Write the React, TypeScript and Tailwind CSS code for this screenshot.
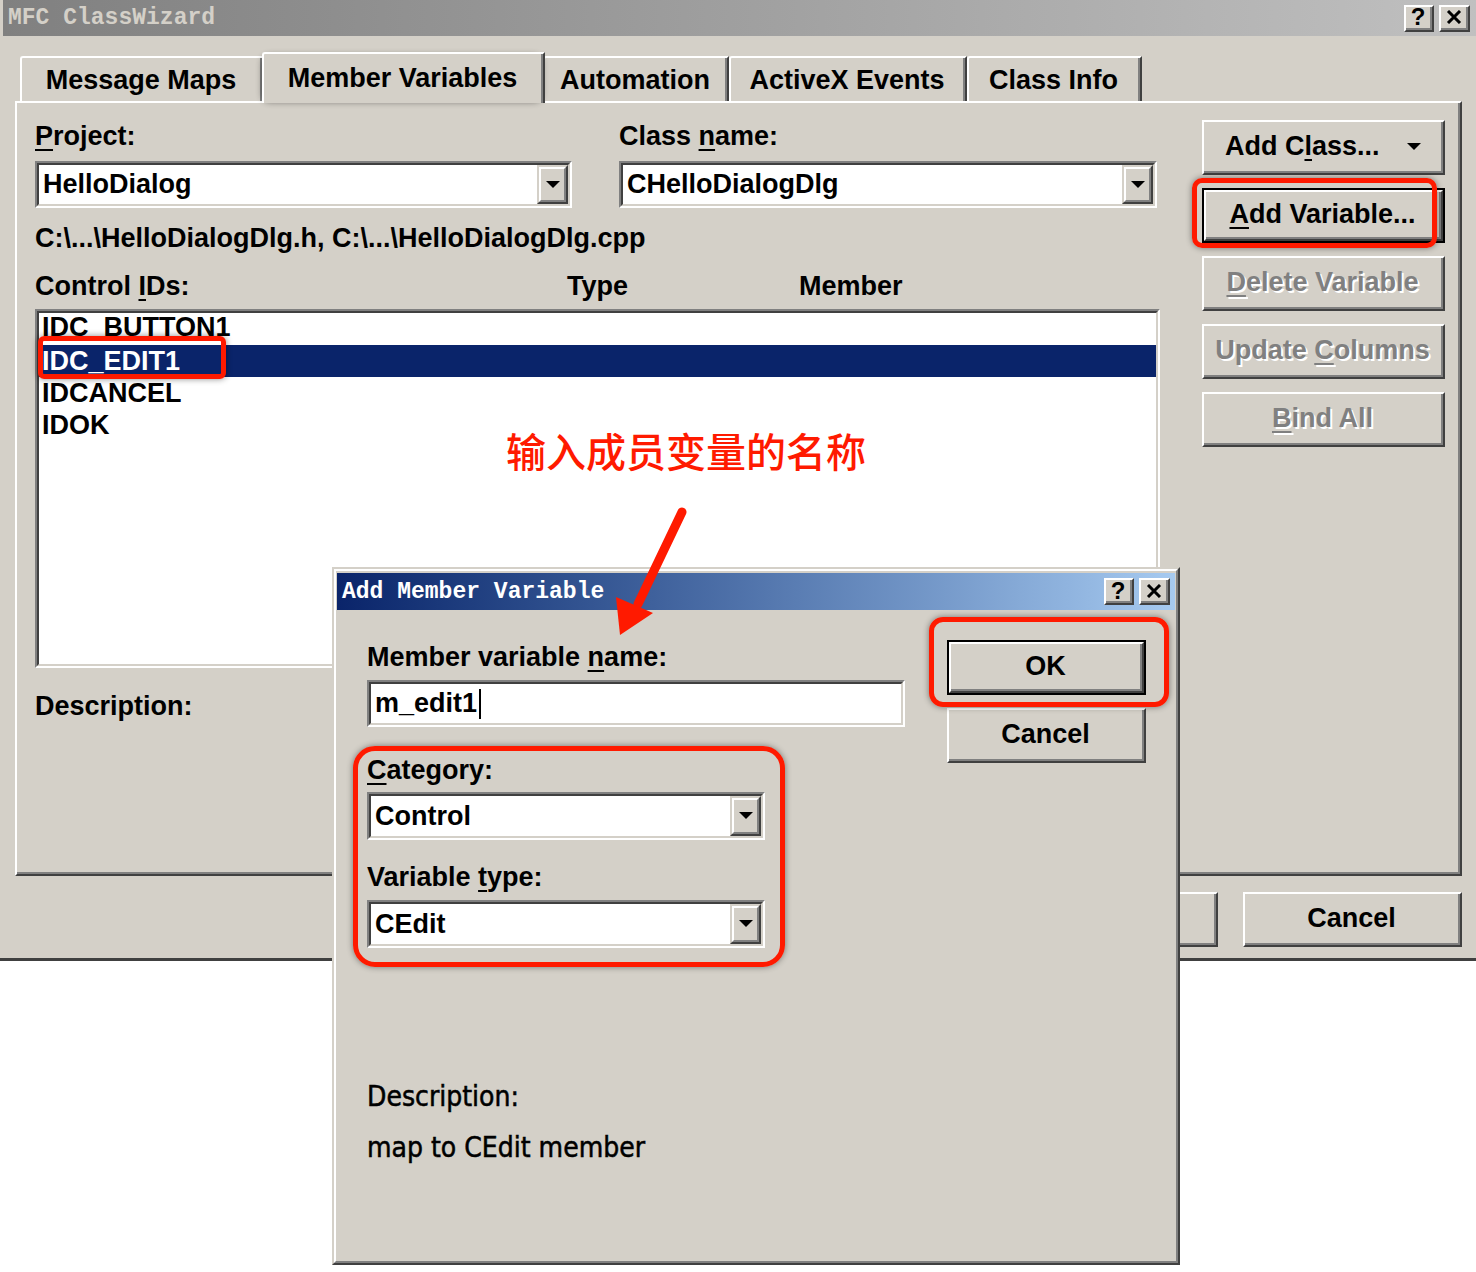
import React from "react";

const FACE = "bg-[#d4d0c8]";

const Mn: React.FC<{ children: React.ReactNode }> = ({ children }) => (
  <span className="underline decoration-2 underline-offset-[4px]">{children}</span>
);

interface ButtonProps {
  children: React.ReactNode;
  isDefault?: boolean;
  disabled?: boolean;
  className?: string;
  innerClassName?: string;
}

const ClassicButton: React.FC<ButtonProps> = ({ children, isDefault, disabled, className, innerClassName }) => {
  const face = (
    <div className="h-full w-full border-2 border-t-white border-l-white border-r-[#404040] border-b-[#404040]">
      <div
        className={`flex h-full w-full items-center border-r-2 border-b-2 border-[#808080] text-[27px] font-bold ${
          innerClassName ?? "justify-center"
        } ${disabled ? "text-[#808080] [text-shadow:2px_2px_0_#ffffff]" : "text-black"}`}
      >
        {children}
      </div>
    </div>
  );
  return <div className={`${FACE} ${isDefault ? "border-2 border-black" : ""} ${className ?? ""}`}>{face}</div>;
};

const Sunken: React.FC<{ children: React.ReactNode; className?: string }> = ({ children, className }) => (
  <div className={`border-2 border-t-[#808080] border-l-[#808080] border-r-white border-b-white ${className ?? ""}`}>
    <div className="h-full w-full border-2 border-t-[#404040] border-l-[#404040] border-r-[#d4d0c8] border-b-[#d4d0c8] bg-white">
      {children}
    </div>
  </div>
);

const DownArrow = () => (
  <svg width="14" height="8" viewBox="0 0 14 8">
    <path d="M0 0H14L7 7Z" fill="#000" />
  </svg>
);

const Combo: React.FC<{ value: string; className?: string }> = ({ value, className }) => (
  <Sunken className={className}>
    <div className="flex h-full items-center">
      <span className="flex-1 pl-[4px] text-[27px] font-bold leading-none">{value}</span>
      <div className="h-full w-[31px] border-2 border-t-[#d4d0c8] border-l-[#d4d0c8] border-r-[#404040] border-b-[#404040]">
        <div className="flex h-full items-center justify-center border-2 border-t-white border-l-white border-r-[#808080] border-b-[#808080] bg-[#d4d0c8]">
          <DownArrow />
        </div>
      </div>
    </div>
  </Sunken>
);

const CloseGlyph = () => (
  <svg width="16" height="14" viewBox="0 0 16 14">
    <path d="M2 1L14 13M14 1L2 13" stroke="#000" strokeWidth="3" />
  </svg>
);

const CaptionButtons = () => (
  <div className="flex gap-[5px]">
    <ClassicButton className="h-[27px] w-[30px]">
      <span className="text-[24px] leading-none">?</span>
    </ClassicButton>
    <ClassicButton className="h-[27px] w-[31px]">
      <CloseGlyph />
    </ClassicButton>
  </div>
);

const tabs = [
  { label: "Message Maps", w: "w-[244px]" },
  { label: "Member Variables", w: "w-[283px]", selected: true },
  { label: "Automation", w: "w-[186px]" },
  { label: "ActiveX Events", w: "w-[238px]" },
  { label: "Class Info", w: "w-[175px]" },
];

const controlIds = ["IDC_BUTTON1", "IDC_EDIT1", "IDCANCEL", "IDOK"];

const RedBox: React.FC<{ className: string }> = ({ className }) => (
  <div
    className={`pointer-events-none absolute border-[5px] border-[#ff1a00] shadow-[0_0_6px_rgba(0,0,0,0.45)] ${className}`}
  />
);

export default function App() {
  return (
    <div className="relative h-[1272px] w-[1476px] overflow-hidden bg-white font-['Liberation_Sans',Arial,sans-serif] text-black">
      {/* ClassWizard window */}
      <div className="flex h-[961px] flex-col border-b-[3px] border-[#404040] bg-[#d4d0c8] pl-[3px]">
        <div className="flex h-[36px] items-center justify-between bg-linear-to-r from-[#808080] to-[#c0c0c0] pl-[5px] pr-[6px]">
          <span className="font-['Liberation_Mono',monospace] text-[23px] font-bold text-[#d4d0c8]">MFC ClassWizard</span>
          <CaptionButtons />
        </div>

        {/* tabs */}
        <div className="flex h-[65px] items-end pl-[17px]">
          {tabs.map((t) =>
            t.selected ? (
              <div
                key={t.label}
                className={`relative z-10 -mx-[2px] mb-[-2px] h-[51px] ${t.w} rounded-tl-[3px] border-t-2 border-l-2 border-r-2 border-white border-r-[#404040] bg-[#d4d0c8]`}
              >
                <div className="flex h-full items-start justify-center border-r-2 border-[#808080] pt-[4px] text-[27px] font-bold">
                  {t.label}
                </div>
              </div>
            ) : (
              <div
                key={t.label}
                className={`h-[45px] ${t.w} rounded-tl-[3px] border-t-2 border-l-2 border-r-2 border-white border-r-[#404040]`}
              >
                <div className="flex h-full items-start justify-center border-r-2 border-[#808080] pt-[2px] text-[27px] font-bold">
                  {t.label}
                </div>
              </div>
            )
          )}
        </div>

        {/* tab page */}
        <div className="ml-[12px] h-[775px] w-[1447px] border-2 border-t-white border-l-white border-r-[#404040] border-b-[#404040]">
          <div className="flex h-full border-r-2 border-b-2 border-[#808080] pl-[18px] pt-[17px]">
            <div className="flex w-[1125px] flex-col text-[27px] font-bold">
              <div className="mt-[1px] flex h-[30px] leading-[30px]">
                <span className="w-[584px]">
                  <Mn>P</Mn>roject:
                </span>
                <span>
                  Class <Mn>n</Mn>ame:
                </span>
              </div>
              <div className="mt-[10px] flex h-[47px]">
                <Combo value="HelloDialog" className="h-[47px] w-[537px]" />
                <Combo value="CHelloDialogDlg" className="ml-[47px] h-[47px] w-[538px]" />
              </div>
              <div className="mt-[15px] h-[30px] leading-[30px]">C:\...\HelloDialogDlg.h, C:\...\HelloDialogDlg.cpp</div>
              <div className="mt-[18px] flex h-[30px] leading-[30px]">
                <span className="w-[532px]">
                  Control <Mn>I</Mn>Ds:
                </span>
                <span className="w-[232px]">Type</span>
                <span>Member</span>
              </div>
              <Sunken className="mt-[8px] h-[359px] w-[1125px]">
                <div className="h-full overflow-hidden">
                  {controlIds.map((id, i) => (
                    <div
                      key={id}
                      className={`h-[32px] pl-[3px] leading-[32px] ${
                        i === 1 ? "bg-[#0a246a] text-white" : ""
                      } ${i === 0 ? "-mt-[2px] h-[34px]" : ""}`}
                    >
                      {id}
                    </div>
                  ))}
                </div>
              </Sunken>
              <div className="mt-[23px] h-[30px] leading-[30px]">Description:</div>
            </div>

            <div className="ml-[42px] flex w-[243px] flex-col gap-[13px]">
              <ClassicButton className="h-[55px]" innerClassName="justify-between pl-[21px] pr-[20px]">
                <span>
                  Add C<Mn>l</Mn>ass...
                </span>
                <DownArrow />
              </ClassicButton>
              <ClassicButton className="h-[55px]" isDefault>
                <span>
                  <Mn>A</Mn>dd Variable...
                </span>
              </ClassicButton>
              <ClassicButton className="h-[55px]" disabled>
                <span>
                  <Mn>D</Mn>elete Variable
                </span>
              </ClassicButton>
              <ClassicButton className="h-[55px]" disabled>
                <span>
                  Update <Mn>C</Mn>olumns
                </span>
              </ClassicButton>
              <ClassicButton className="h-[55px]" disabled>
                <span>
                  <Mn>B</Mn>ind All
                </span>
              </ClassicButton>
            </div>
          </div>
        </div>

        <div className="mt-[16px] flex justify-end gap-[25px] pr-[14px]">
          <ClassicButton className="h-[55px] w-[219px]">OK</ClassicButton>
          <ClassicButton className="h-[55px] w-[219px]">Cancel</ClassicButton>
        </div>
      </div>

      {/* Add Member Variable dialog */}
      <div className="absolute left-[332px] top-[567px] h-[698px] w-[848px] border-2 border-t-[#d4d0c8] border-l-[#d4d0c8] border-r-[#404040] border-b-[#404040] bg-[#d4d0c8]">
        <div className="flex h-full w-full flex-col border-2 border-t-white border-l-white border-r-[#808080] border-b-[#808080] px-[1px] pt-[2px]">
          <div className="flex h-[37px] items-center justify-between bg-linear-to-r from-[#0a246a] to-[#a6caf0] pl-[5px] pr-[5px]">
            <span className="pt-[2px] font-['Liberation_Mono',monospace] text-[23px] font-bold text-white">Add Member Variable</span>
            <CaptionButtons />
          </div>
          <div className="flex pl-[30px] text-[27px] font-bold">
            <div className="flex w-[538px] flex-col">
              <div className="mt-[32px] h-[30px] leading-[30px]">
                Member variable <Mn>n</Mn>ame:
              </div>
              <Sunken className="mt-[8px] h-[47px] w-[538px]">
                <div className="flex h-full items-center pl-[4px] leading-none">
                  <span>m_edit1</span>
                  <span className="ml-[2px] h-[30px] w-[2px] bg-black" />
                </div>
              </Sunken>
              <div className="mt-[28px] h-[30px] leading-[30px]">
                <Mn>C</Mn>ategory:
              </div>
              <Combo value="Control" className="mt-[7px] h-[48px] w-[398px]" />
              <div className="mt-[22px] h-[30px] leading-[30px]">
                Variable <Mn>t</Mn>ype:
              </div>
              <Combo value="CEdit" className="mt-[8px] h-[48px] w-[398px]" />
              <div className="mt-[134px] h-[30px] font-['DejaVu_Sans_Condensed','DejaVu_Sans',sans-serif] text-[28px] font-normal leading-[30px] [font-stretch:condensed] [-webkit-text-stroke:0.5px_#000]">
                Description:
              </div>
              <div className="mt-[21px] h-[30px] font-['DejaVu_Sans_Condensed','DejaVu_Sans',sans-serif] text-[28px] font-normal leading-[30px] [font-stretch:condensed] [-webkit-text-stroke:0.5px_#000]">
                map to CEdit member
              </div>
            </div>
            <div className="ml-[42px] flex w-[199px] flex-col">
              <ClassicButton className="mt-[30px] h-[55px]" isDefault>
                OK
              </ClassicButton>
              <ClassicButton className="mt-[13px] h-[55px]">Cancel</ClassicButton>
            </div>
          </div>
        </div>
      </div>

      {/* annotations */}
      <RedBox className="left-[262px] top-[55px] h-[47px] w-[280px] rounded-[8px]" />
      <RedBox className="left-[1192px] top-[178px] h-[70px] w-[245px] rounded-[10px]" />
      <RedBox className="left-[38px] top-[336px] h-[43px] w-[188px] rounded-[6px]" />
      <RedBox className="left-[929px] top-[617px] h-[90px] w-[240px] rounded-[14px]" />
      <RedBox className="left-[353px] top-[746px] h-[221px] w-[432px] rounded-[22px]" />

      <div className="absolute left-[506px] top-[424px] font-['Noto_Sans_CJK_SC',sans-serif] text-[40px] font-medium leading-[52px] text-[#ff1a00]">
        输入成员变量的名称
      </div>
      <svg className="absolute left-[600px] top-[500px]" width="100" height="145" viewBox="0 0 100 145">
        <path d="M82 12L38 104" stroke="#ff1a00" strokeWidth="9" strokeLinecap="round" />
        <path d="M16 97L20 135L53 113Z" fill="#ff1a00" />
      </svg>
    </div>
  );
}
